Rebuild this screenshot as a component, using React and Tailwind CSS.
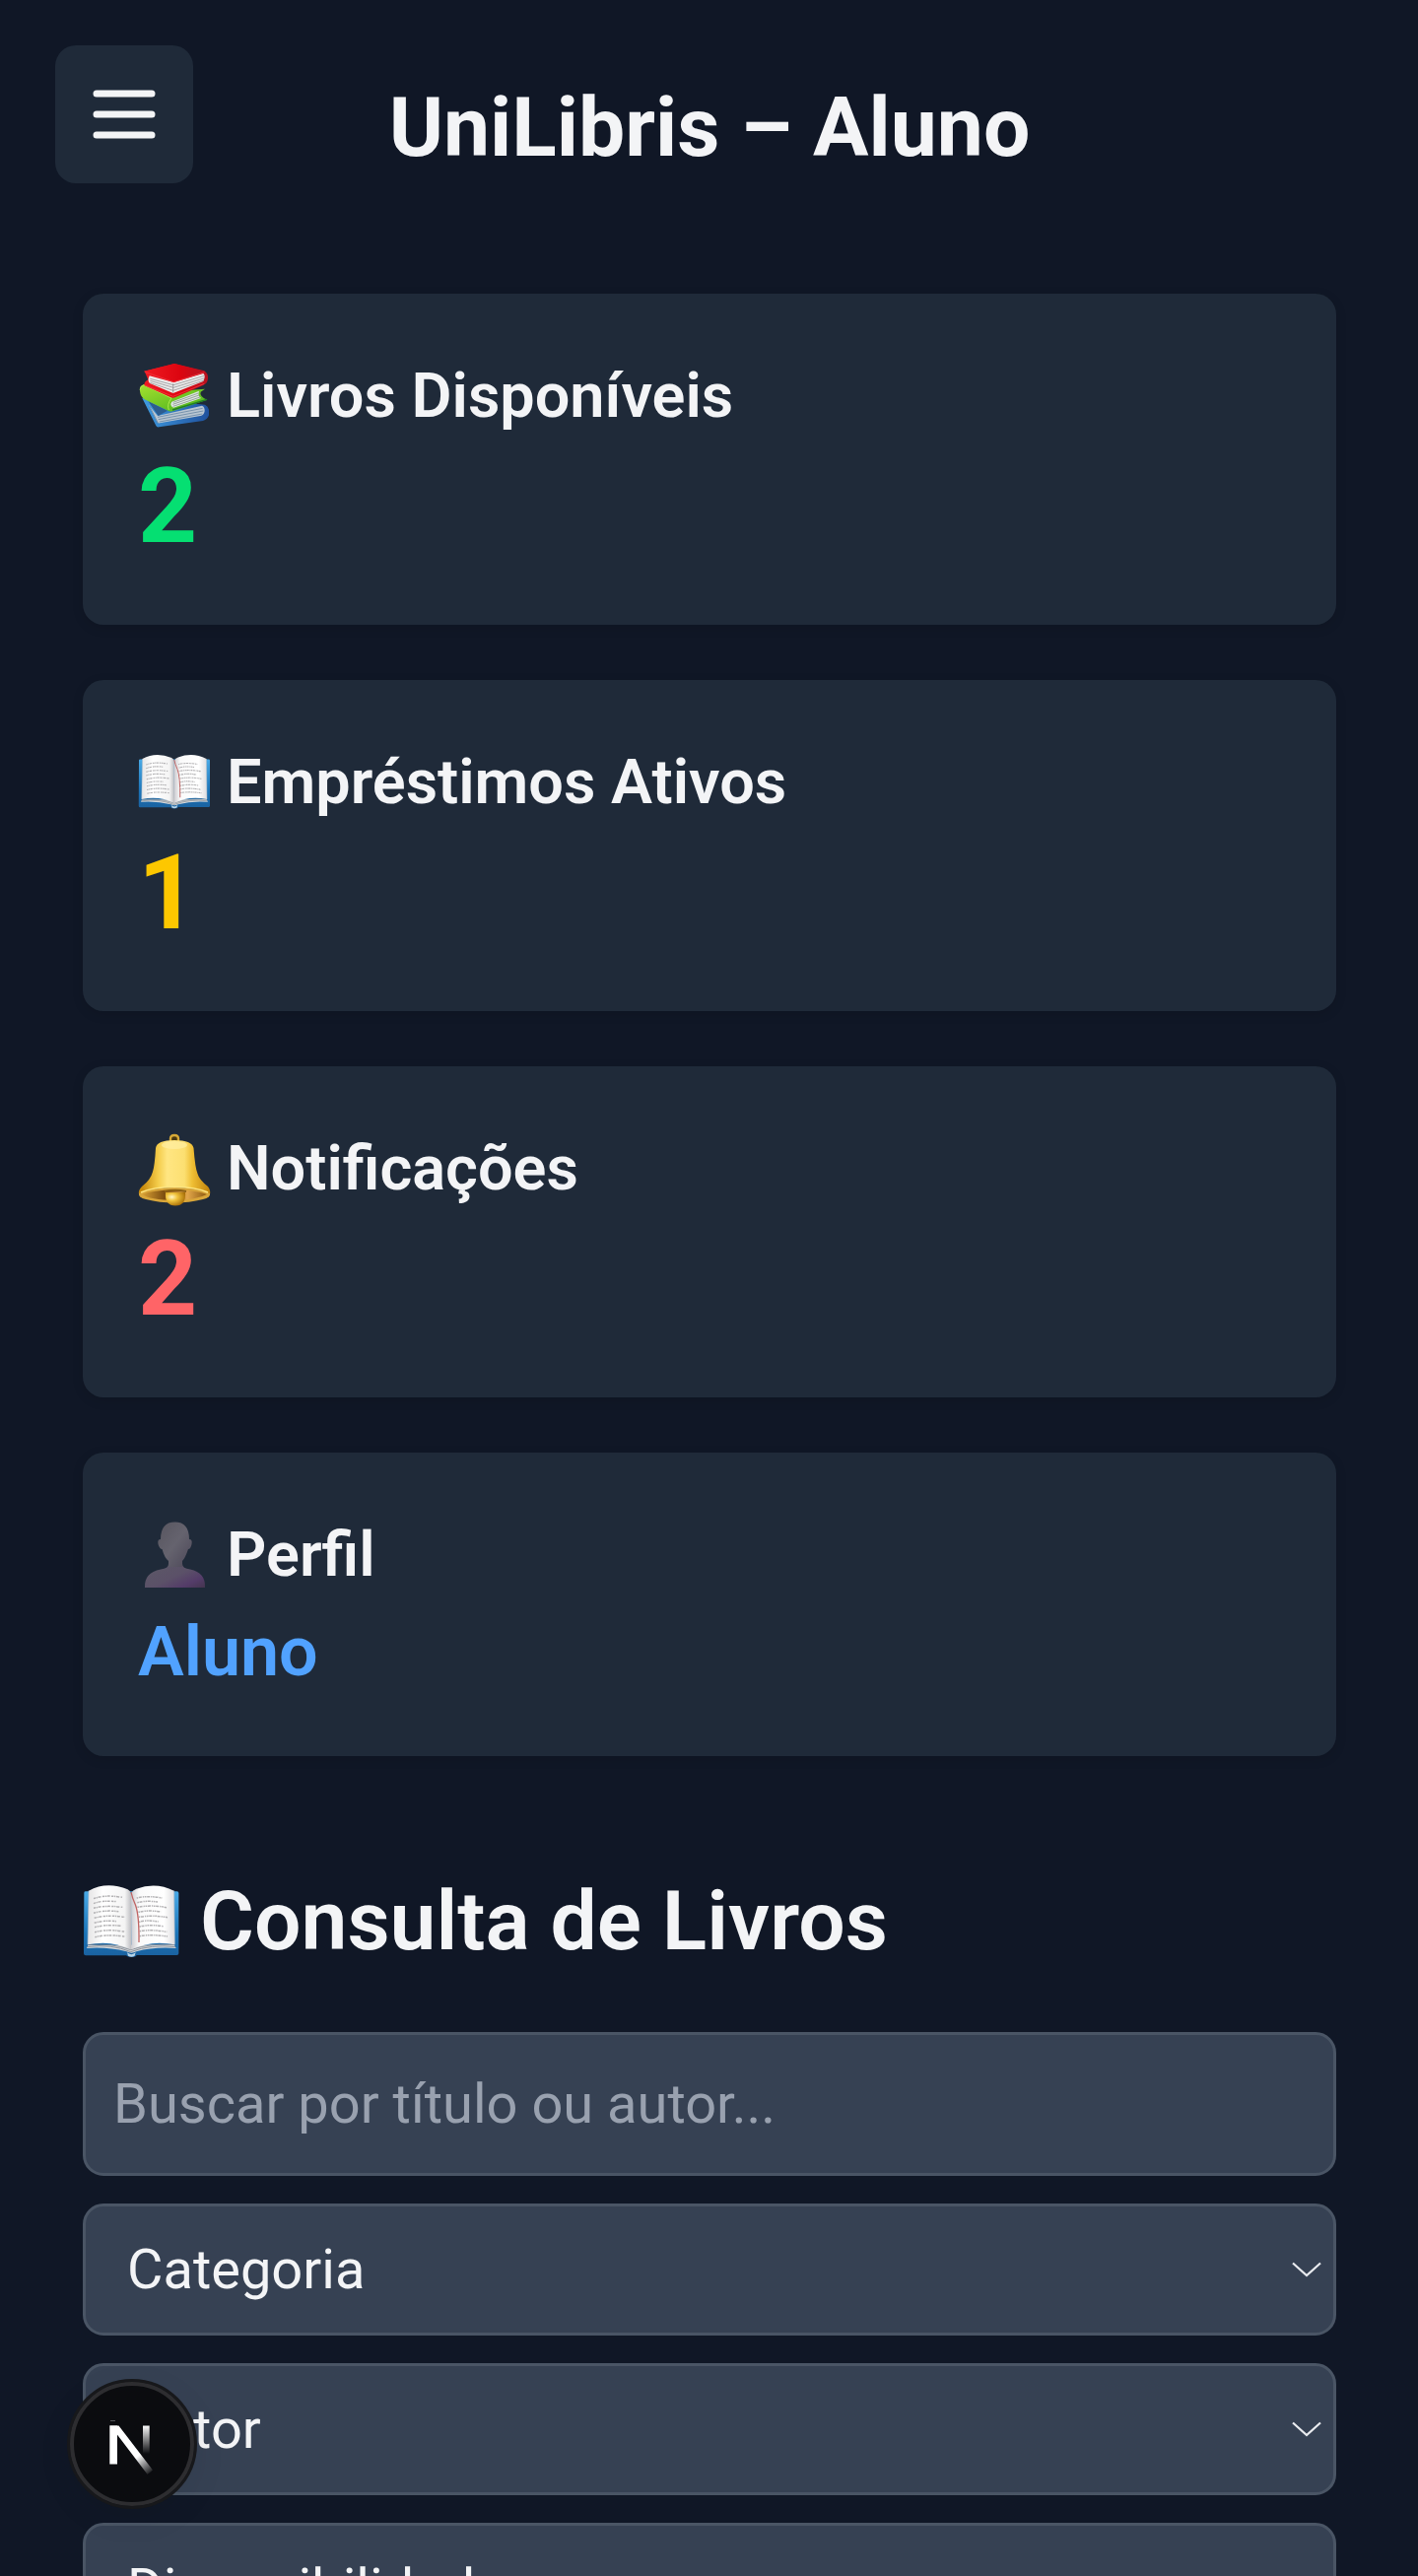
function BooksIcon() {
  return (
    <svg className="mt-2 h-[76px] w-[72px]" viewBox="18 0 216 228" aria-hidden="true">
      <defs>
        <linearGradient id="booksRed" x1="0" y1="0" x2="1" y2="0">
          <stop offset="0" stopColor="#ef1a22" />
          <stop offset=".6" stopColor="#dc0510" />
          <stop offset="1" stopColor="#b5121f" />
        </linearGradient>
        <linearGradient id="booksGreen" x1="0" y1="0" x2="1" y2="1">
          <stop offset="0" stopColor="#a5e02f" />
          <stop offset="1" stopColor="#43b01c" />
        </linearGradient>
        <linearGradient id="booksBlue" x1="0" y1="0" x2="1" y2="0">
          <stop offset="0" stopColor="#3f9be0" />
          <stop offset="1" stopColor="#1f519e" />
        </linearGradient>
      </defs>
      <path d="M31 126 L73 210 Q75 215 82 214 L216 195 Q236 188 235 168 Q234 151 222 146 Z" fill="url(#booksBlue)" />
      <path d="M50 146 L78 180 L213 149 Q222 153 221 166 Q219 178 208 180 L84 202 Q78 203 76 197 Z" fill="#b9c6d2" />
      <path d="M53 150 L79 202 M78 184 L215 157 M80 191 L217 165 M83 198 L214 174" stroke="#6685a3" strokeWidth="2.4" fill="none" />
      <path d="M49 135 L108 164 L80 180 Z" fill="#2d5d91" />
      <path d="M24 105 Q21 88 37 84 L130 105 L222 98 L209 107 Q204 120 229 131 L123 166 Q117 168 110 164 L38 130 Q26 122 24 105 Z" fill="url(#booksGreen)" />
      <path d="M121 137 L204 104 Q199 119 210 126 L126 155 Q113 147 121 137 Z" fill="#dfe6e4" />
      <path d="M125 139 L202 111 M124 145 L204 117 M125 151 L207 123" stroke="#809082" strokeWidth="2.3" fill="none" />
      <path d="M24 101 Q25 88 36 86 L120 126 Q105 146 112 162" stroke="#baf157" strokeWidth="2.5" fill="none" />
      <path d="M123 162 L228 130" stroke="#207e26" strokeWidth="4" />
      <path d="M38 44 L129 21 L220 43 Q236 54 229 75 Q227 83 216 87 L131 124 Q124 127 117 123 L38 88 Q34 78 49 70 Z" fill="url(#booksRed)" />
      <path d="M53 58 L127 78 L217 51 Q225 58 217 75 L125 111 L54 81 Q46 73 53 58 Z" fill="#ececeb" />
      <path d="M55 67 L126 86 L220 58 M55 73 L126 94 L221 65 M55 79 L125 103 L219 72 M125 82 L125 110" stroke="#838285" strokeWidth="2" fill="none" />
      <path d="M36 44 L127 76 L221 45 L129 21 Z" fill="url(#booksRed)" />
      <path d="M38 46 L127 77 L220 47 M40 87 L125 121 L220 82" stroke="#f2353d" strokeWidth="2.5" fill="none" />
    </svg>
  );
}

const leftLines = [
  "M45 56 Q78 43 132 52",
  "M45 71 Q70 60 115 65",
  "M45 85 Q80 75 133 82",
  "M45 100 Q75 90 121 95",
  "M47 115 Q85 104 140 112",
  "M47 130 Q75 121 114 125",
  "M48 143 Q80 134 130 139",
  "M48 158 Q85 148 139 156",
  "M49 173 Q85 164 139 171",
];

const rightLines = [
  "M176 54 Q210 46 253 54",
  "M178 68 Q205 61 240 66",
  "M178 82 Q220 74 267 83",
  "M181 97 Q213 90 250 96",
  "M182 112 Q225 105 270 113",
  "M183 127 Q205 120 242 126",
  "M184 141 Q215 134 257 140",
  "M185 155 Q222 149 268 157",
  "M185 170 Q222 164 270 171",
];

function BookIcon({ className }) {
  return (
    <svg className={className} viewBox="12 0 300 252" aria-hidden="true">
      <defs>
        <linearGradient id="bookPageL" x1="0" y1="0" x2="1" y2="0">
          <stop offset="0" stopColor="#e5e4e5" />
          <stop offset=".35" stopColor="#ffffff" />
          <stop offset=".85" stopColor="#f4f4f4" />
          <stop offset="1" stopColor="#bcbcc0" />
        </linearGradient>
        <linearGradient id="bookPageR" x1="0" y1="0" x2="1" y2="0">
          <stop offset="0" stopColor="#cccbd0" />
          <stop offset=".18" stopColor="#fafafa" />
          <stop offset=".75" stopColor="#fff" />
          <stop offset="1" stopColor="#dedddf" />
        </linearGradient>
        <linearGradient id="bookCover" x1="0" y1="0" x2="0" y2="1">
          <stop offset="0" stopColor="#48a9e6" />
          <stop offset=".65" stopColor="#1b74b8" />
          <stop offset="1" stopColor="#1a619f" />
        </linearGradient>
      </defs>
      <path d="M16 38 Q16 34 21 34 H299 Q304 34 304 39 V223 Q304 228 298 228 H176 Q173 234 160 234 Q148 234 144 229 H21 Q15 229 15 223 Z" fill="url(#bookCover)" />
      <path d="M28 198 L24 207 Q85 202 145 217 Q160 225 175 217 Q230 202 296 207 L290 196 Z" fill="#d4d8dc" />
      <path d="M26 203 Q100 193 158 218 Q220 194 294 203 M28 197 Q100 190 158 212 Q220 190 291 197" stroke="#737a83" strokeWidth="2.2" fill="none" />
      <path d="M30 32 Q85 2 149 28 Q157 32 159 42 L160 211 Q98 181 27 196 Z" fill="url(#bookPageL)" />
      <path d="M159 40 Q164 29 175 26 Q235 4 290 32 L292 196 Q220 181 160 211 Z" fill="url(#bookPageR)" />
      <path d="M30 32 L27 196" stroke="#a9bac9" strokeWidth="2" />
      <path d="M290 32 L292 196" stroke="#a9bac9" strokeWidth="2" />
      {leftLines.map((d) => (
        <path key={d} d={d} fill="none" stroke="#b4b3b5" strokeWidth="4.5" strokeDasharray="7 2 4 2 9 4" />
      ))}
      {rightLines.map((d) => (
        <path key={d} d={d} fill="none" stroke="#b4b3b5" strokeWidth="4.5" strokeDasharray="5 2 9 3 4 2" />
      ))}
      <path d="M159 36 Q162 52 172 74 Q184 105 183 189" fill="none" stroke="#c06463" strokeWidth="4" />
      <path d="M147 220 Q160 231 173 220 L170 230 Q160 236 150 230 Z" fill="#b8d3e6" />
    </svg>
  );
}

function BellIcon() {
  return (
    <svg className="mt-3 h-[74px] w-[74px]" viewBox="0 0 74 74" aria-hidden="true">
      <defs>
        <linearGradient id="bellBody" x1="0" y1="0" x2="1" y2="0">
          <stop offset=".05" stopColor="#c78a0c" />
          <stop offset=".27" stopColor="#f4cc4a" />
          <stop offset=".4" stopColor="#ffe682" />
          <stop offset=".64" stopColor="#fcdf71" />
          <stop offset=".75" stopColor="#efbe34" />
          <stop offset="1" stopColor="#c18109" />
        </linearGradient>
        <linearGradient id="bellRim" x1="0" y1="0" x2="1" y2="0">
          <stop offset="0" stopColor="#d9a034" />
          <stop offset=".35" stopColor="#7c4d10" />
          <stop offset=".7" stopColor="#e2a64a" />
          <stop offset="1" stopColor="#8e5a10" />
        </linearGradient>
        <radialGradient id="bellClapper" cx=".32" cy=".35" r=".7">
          <stop offset="0" stopColor="#fff6c5" />
          <stop offset=".4" stopColor="#f0c33c" />
          <stop offset="1" stopColor="#a86f08" />
        </radialGradient>
      </defs>
      <path d="M33 8 V5.500 Q33 2 37 2 Q41 2 41 5.500 V8" fill="#4b3910" stroke="#d7a937" strokeWidth="2.400" />
      <path d="M18 15 Q19 7 37 7 Q55 7 56.500 15 Q58 35 60.500 41 Q62 47 71 54 Q74 58 73 62 Q59 55 37 55 Q15 55 1 62 Q0 58 4 54 Q13 47 15 39 Q17 33 18 15 Z" fill="url(#bellBody)" />
      <path d="M1 61 Q15 55 37 55 Q59 55 73 61 Q74 65 66 67 Q52 70.500 37 70.500 Q22 70.500 8 67 Q0 65 1 61 Z" fill="#d9a63a" />
      <path d="M4 62 Q15 57.500 37 57.500 Q59 57.500 70 62 Q60 67.500 37 68 Q12 67.500 4 62 Z" fill="url(#bellRim)" />
      <path d="M3 60 Q15 54.500 37 54.500 Q59 54.500 71 60" fill="none" stroke="#ffe680" strokeWidth="1.600" />
      <path d="M28 60 H48 Q49 73.500 38 73.500 Q27 73.500 28 60 Z" fill="url(#bellClapper)" />
      <path d="M27 59 Q37 56.500 49 59" stroke="#8c6114" strokeWidth="2" fill="none" />
      <ellipse cx="37" cy="12" rx="13" ry="4" fill="#fff0a6" opacity=".65" />
    </svg>
  );
}

function PersonIcon() {
  return (
    <svg className="mt-3.5 h-[68px] w-[74px]" viewBox="0 0 74 68" aria-hidden="true">
      <defs>
        <linearGradient id="personHead" x1="0" y1="0" x2="1" y2="1">
          <stop offset="0" stopColor="#57555f" />
          <stop offset=".5" stopColor="#65636e" />
          <stop offset="1" stopColor="#4c4758" />
        </linearGradient>
        <linearGradient id="personBody" x1="0" y1="0" x2="1" y2="1">
          <stop offset="0" stopColor="#5c5a66" />
          <stop offset=".55" stopColor="#5b5168" />
          <stop offset=".8" stopColor="#543c69" />
          <stop offset="1" stopColor="#44354f" />
        </linearGradient>
      </defs>
      <path d="M7 67 Q6 52 23 48.500 Q31 47.500 31 43 L31 38 H45 V43 Q45 47.500 53 48.500 Q69 52 68 67 Z" fill="url(#personBody)" />
      <path d="M37.500 0.500 Q52 0.500 52 18 Q55.500 18 54.500 23 Q53.500 28 51 28 Q48 37 45 40 V46 H31 V40 Q27 37 24.500 28 Q22 28 20.500 23 Q19.500 18 23 18 Q23 0.500 37.500 0.500 Z" fill="url(#personHead)" />
    </svg>
  );
}

function StatCard({ icon, title, children }) {
  return (
    <section className="rounded-[21px] bg-[#1f2a39] p-14 shadow-[0_3px_12px_rgba(0,0,0,0.12)]">
      <h2 className="flex h-[98px] items-start gap-4 text-[63px] font-semibold leading-[96px] text-[#f3f4f6]">
        <span className="flex w-[74px] shrink-0 items-start">{icon}</span>
        {title}
      </h2>
      {children}
    </section>
  );
}

function Select({ label }) {
  return (
    <div className="flex h-[134px] shrink-0 items-center justify-between rounded-[21px] border-[3px] border-[#4a5565] bg-[#364153] pl-[42px] pr-[11px] text-[56px] leading-[84px] text-[#f3f4f6]">
      {label}
      <svg className="h-4 w-8" viewBox="0 0 32 16" fill="none" stroke="#e9ebef" strokeWidth="2.2" aria-hidden="true">
        <path d="M2 1.500 L16 14 L30 1.500" />
      </svg>
    </div>
  );
}

function DevBadge() {
  return (
    <div className="absolute left-[68px] top-[2414px] flex size-[132px] items-center justify-center rounded-full border-[3px] border-[#17181b] bg-[#0b0c0f] shadow-[0_10px_36px_rgba(0,0,0,0.06)]">
      <div className="flex size-[126px] items-center justify-center rounded-full border-[4px] border-[#2d2d30]">
        <svg className="size-[118px]" viewBox="75 2421 118 118" aria-hidden="true">
          <defs>
            <linearGradient id="badgeDiag" gradientUnits="userSpaceOnUse" x1="139" y1="2493" x2="153" y2="2511">
              <stop offset="0" stopColor="#fff" />
              <stop offset="1" stopColor="#fff" stopOpacity="0" />
            </linearGradient>
            <linearGradient id="badgeStem" gradientUnits="userSpaceOnUse" x1="0" y1="2461" x2="0" y2="2490">
              <stop offset="0" stopColor="#fff" />
              <stop offset="1" stopColor="#fff" stopOpacity="0" />
            </linearGradient>
          </defs>
          <path d="M111.300 2461.500 H119 V2500.500 H111.300 Z" fill="#fff" />
          <path d="M111.300 2461.500 H120.500 L155 2506.500 Q152.500 2509 149.500 2510.800 L117 2468 Z" fill="url(#badgeDiag)" />
          <path d="M145 2461.500 H151.700 V2490 H145 Z" fill="url(#badgeStem)" />
          <path d="M112 2456.500 H117" stroke="#55575b" strokeWidth="1" />
        </svg>
      </div>
    </div>
  );
}

export default function App() {
  return (
    <div className="relative h-[2614px] w-full overflow-hidden bg-[#101726] font-[Roboto,sans-serif] text-[#f3f4f6]">
      <header className="relative flex h-[298px] justify-center pl-px pt-[74px]">
        <button className="absolute left-14 top-[46px] flex size-[140px] items-center justify-center rounded-[21px] bg-[#1f2a39]" aria-label="Menu">
          <svg className="size-[84px]" viewBox="0 0 24 24" fill="none" stroke="#f3f4f6" strokeWidth="2" strokeLinecap="round">
            <path d="M4 6h16M4 12h16M4 18h16" />
          </svg>
        </button>
        <h1 className="text-[84px] font-bold leading-[112px]">UniLibris – Aluno</h1>
      </header>

      <main className="pl-[84px] pr-[83px]">
        <div className="flex flex-col gap-14">
          <StatCard icon={<BooksIcon />} title="Livros Disponíveis">
            <p className="text-[105px] font-bold leading-[126px] text-[#05df72]">2</p>
          </StatCard>
          <StatCard icon={<BookIcon className="mt-4 h-[63px] w-[75px] shrink-0" />} title="Empréstimos Ativos">
            <p className="text-[105px] font-bold leading-[126px] text-[#fdc700]">1</p>
          </StatCard>
          <StatCard icon={<BellIcon />} title="Notificações">
            <p className="text-[105px] font-bold leading-[126px] text-[#ff6467]">2</p>
          </StatCard>
          <StatCard icon={<PersonIcon />} title="Perfil">
            <p className="mb-0.5 text-[70px] font-semibold leading-[96px] text-[#51a2ff]">Aluno</p>
          </StatCard>
        </div>

        <h2 className="mt-28 flex h-28 items-start gap-[19px] text-[84px] font-semibold leading-[112px]">
          <BookIcon className="mt-[14px] h-[84px] w-[100px] shrink-0" />
          Consulta de Livros
        </h2>

        <div className="mt-14 flex flex-col gap-7">
          <input
            className="h-[146px] rounded-[21px] border-[3px] border-[#4a5565] bg-[#364153] px-7 text-[56px] outline-none placeholder:text-[#99a1af]"
            placeholder="Buscar por título ou autor..."
          />
          <Select label="Categoria" />
          <Select label="Autor" />
          <Select label="Disponibilidade" />
        </div>
      </main>

      <DevBadge />
    </div>
  );
}
